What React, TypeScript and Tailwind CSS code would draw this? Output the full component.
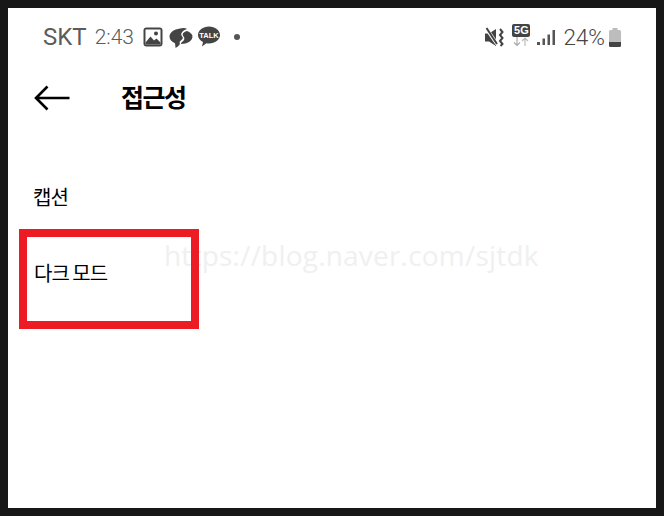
import React from 'react';

const sans = 'font-["Roboto","Noto_Sans_CJK_KR",sans-serif]';

const GalleryIcon = () => (
  <svg width="20" height="20" viewBox="0 0 20 20" className="ml-[9px]">
    <rect x="0.500" y="0.500" width="19" height="19" rx="3" fill="#444" />
    <rect x="2.500" y="2.500" width="15" height="15" fill="#fff" />
    <circle cx="13" cy="6.500" r="2" fill="#444" />
    <path d="M2.500 15.500l5-6 3.500 4 2.500-2 4 4v2h-15z" fill="#444" />
  </svg>
);

const ChatBubbleIcon = () => (
  <svg width="24" height="23" viewBox="0 0 24 23" className="ml-[6px]">
    <path d="M11 2.500C5 3.200.5 6.500.5 10.500c0 3 2.300 5.400 5.500 6.700l.6 4.800c1.400-.8 3.200-2.400 4.400-4.100-1-1.500-.2-2.700 1.200-3.700 1.600-1.100 2.100-2.300 1-3.600-1.500-1.900-1.300-3 0-4.600 1-1.300 2.800-2.400 5-3C15.500 1.500 13.300 2.100 11 2.500z" fill="#444" />
    <path d="M18 5c-2.200.7-3.700 1.600-4.200 2.700-.4.900 0 1.700.8 2.700 1.400 1.800.8 3.600-1 5-1.300 1-1.900 1.700-1.400 2.500 6 0 11.300-3 11.300-7.500 0-2.200-2.200-4-5.500-5.400z" fill="#444" />
  </svg>
);

const TalkIcon = () => (
  <div className="relative ml-[5px] w-[22px] h-[22px]">
    <svg width="22" height="22" viewBox="0 0 22 22" className="absolute inset-0">
      <path d="M11 .5C5 .5 0 4.300 0 9c0 3 2 5.600 5 7.100L4 20.500l4.400-3.200c.8.200 1.700.2 2.600.2 6 0 11-3.800 11-8.500S17 .5 11 .5z" fill="#444" />
    </svg>
    <span className="absolute left-0 right-0 top-[5px] text-center text-[7.500px] leading-[9px] font-bold text-white font-['Liberation_Sans',sans-serif]">
      TALK
    </span>
  </div>
);

const MuteIcon = () => (
  <svg width="19" height="21" viewBox="0 0 19 21">
    <path d="M0 6.500h4L11 2v17l-7-4.500H0z" fill="#444" />
    <path d="M1 1l11 16" stroke="#fff" strokeWidth="3.500" />
    <path d="M1.500 1L12 17" stroke="#444" strokeWidth="2" />
    <path d="M15 2l2.500 3-2.500 3 2.500 3-2.500 3 2.500 3-2 2" stroke="#444" strokeWidth="2" fill="none" />
  </svg>
);

const FiveGIcon = () => (
  <div className="relative w-[18px] h-[23px] ml-[8px] mb-[3px]">
    <div className="h-[13px] rounded-[2px] bg-[#444] text-white text-[11px] leading-[13px] font-bold text-center font-['Liberation_Sans',sans-serif]">
      5G
    </div>
    <svg width="18" height="10" viewBox="0 0 18 10" className="absolute left-0 top-[13px]">
      <path d="M5 0v8M2 5.500L5 8.500l3-3" stroke="#aaa" strokeWidth="1.200" fill="none" />
      <path d="M13 9V1M10 4l3-3 3 3" stroke="#bbb" strokeWidth="1.200" fill="none" />
    </svg>
  </div>
);

const SignalIcon = () => (
  <svg width="18" height="17" viewBox="0 0 18 17" className="ml-[7px] mt-[2px]">
    <rect x="0" y="12" width="3" height="3" fill="#555" />
    <rect x="5.500" y="8.500" width="2.500" height="6.500" fill="#555" />
    <rect x="10.500" y="4.500" width="2.500" height="10.500" fill="#555" />
    <rect x="15.500" y="0" width="2.500" height="15" fill="#555" />
  </svg>
);

const BatteryIcon = () => (
  <svg width="14" height="21" viewBox="0 0 14 21" className="ml-[3px]">
    <path d="M4.500 1h5v2h-5z" fill="#bbb" />
    <path d="M1 4.500A1.500 1.500 0 0 1 2.500 3h9A1.500 1.500 0 0 1 13 4.500V15H1z" fill="#bdbdbd" />
    <path d="M1 15h12v3.500a1.500 1.500 0 0 1-1.500 1.500h-9A1.500 1.500 0 0 1 1 18.500z" fill="#444" />
  </svg>
);

const BackArrow = () => (
  <svg width="36" height="26" viewBox="0 0 36 26">
    <path d="M13.500 1.500L2 13l11.500 11.500M2 13h33.500" stroke="#000" strokeWidth="2.600" fill="none" />
  </svg>
);

export default function App() {
  return (
    <div className={`w-[664px] h-[516px] bg-[#171717] p-2 ${sans}`}>
      <div className="relative w-[648px] h-[500px] bg-white flex flex-col">
        <div className="h-[40px] mt-[9px] pl-[35px] pr-[34px] flex items-center justify-between">
          <div className="flex items-center">
            <span className="text-[24px] leading-[26px] text-[#5c5c5c]">SKT</span>
            <span className="ml-[8px] text-[21px] leading-[26px] font-light text-[#5c5c5c]">2:43</span>
            <GalleryIcon />
            <ChatBubbleIcon />
            <TalkIcon />
            <span className="ml-[14px] w-[6px] h-[6px] rounded-full bg-[#555]" />
          </div>
          <div className="flex items-center">
            <MuteIcon />
            <FiveGIcon />
            <SignalIcon />
            <span className="ml-[8px] text-[22.500px] leading-[26px] font-light text-[#444]">24%</span>
            <BatteryIcon />
          </div>
        </div>

        <div className="h-[50px] mt-[16px] pl-[26px] flex items-center">
          <BackArrow />
          <h1 className="ml-[51px] text-[25px] leading-[32px] font-bold text-black font-['Noto_Sans_CJK_KR',sans-serif] tracking-[-1.500px] mb-[4px]">
            접근성
          </h1>
        </div>

        <div className="mt-[60px] pl-[25px] text-[20px] leading-[28px] text-black font-['Noto_Sans_CJK_KR',sans-serif] tracking-[-1px]">
          캡션
        </div>
        <div className="mt-[48px] pl-[26px] text-[20px] leading-[28px] text-black font-['Noto_Sans_CJK_KR',sans-serif] tracking-[-1px]">
          다크 모드
        </div>

        <span className="absolute left-[156px] top-[229px] text-[28px] leading-[36px] tracking-[0.200px] text-[#f0f0f0] font-['Open_Sans',sans-serif] font-normal">
          https://blog.naver.com/sjtdk
        </span>
        <div className="absolute left-[11px] top-[221px] w-[180px] h-[100px] border-[8px] border-[#ed1c24]" />
      </div>
    </div>
  );
}
